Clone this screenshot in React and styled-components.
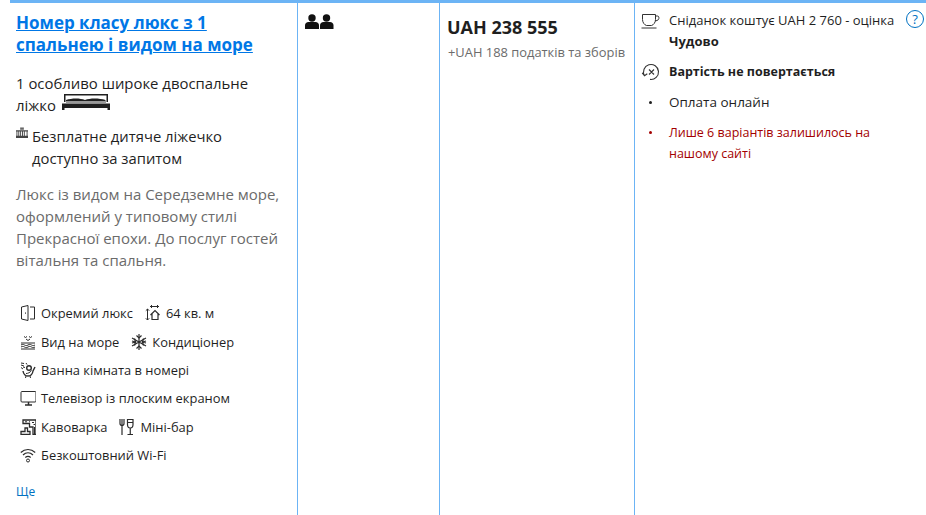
import React from 'react';
import styled, { createGlobalStyle } from 'styled-components';

const GlobalStyle = createGlobalStyle`
  html, body {
    margin: 0;
    padding: 0;
    background: #fff;
  }
  body {
    font-family: "Open Sans", "Noto Sans", sans-serif;
    color: #1f1f1f;
    overflow: hidden;
  }
`;

const icons = {
  door: (
    <>
      <path d="M1.500 2 8 .5v15L1.500 14z" />
      <path d="M10 2h4.500v12H10" />
      <path d="M5.500 7.500v1.200" />
    </>
  ),
  size: (
    <>
      <path d="M5 1.500h9M6.500 0v3M12.500 0v3" />
      <path d="M2.500 4v11M.8 5.700 2.500 4l1.700 1.700M.8 13.300 2.500 15l1.700-1.700" />
      <path d="M5.500 10 10 5.500l4.500 4.500M7 9v5.500h6V9" strokeWidth="1.200" />
    </>
  ),
  sea: (
    <>
      <path d="M4 2.500l1.500 1L7 2.500M9 2.500l1.500 1L12 2.500M6 5l2 1.500L10 5" />
      <path d="M1 9h14M1 11c1.500-.8 2-.8 3.500 0s2 .8 3.500 0 2-.8 3.500 0 2 .8 3.500 0M1 13c1.500-.8 2-.8 3.500 0s2 .8 3.500 0 2-.8 3.500 0 2 .8 3.500 0M1 15h14" />
    </>
  ),
  snow: (
    <>
      <path d="M8 0v16M1 4l14 8M15 4 1 12" strokeWidth="1.200" />
      <path d="M5.500 1.500 8 4l2.500-2.500M5.500 14.500 8 12l2.500 2.500M1 7l3.500 1L3.500 4.500M15 7l-3.500 1 1-3.500M1 9l3.500-1-1 3.500M15 9l-3.500-1 1 3.500" strokeWidth="1.200" />
    </>
  ),
  bath: (
    <>
      <path d="M1 1l3 .500M1 3l3 1M3 5l2 .500M6 1l1 1.500M1 5.500 3 7" />
      <circle cx="9" cy="6" r="2.300" strokeWidth="1.400" />
      <path d="M3 9c.500 3 2 5 5 5 3 0 4.500-2 5-5l2-4" strokeWidth="1.400" />
      <path d="M6 11.500c2 0 4-1 5.500-3M6 14l-.5 2M10 14l.5 2" />
    </>
  ),
  tv: (
    <>
      <rect x="1" y="1.500" width="15" height="10.500" rx="1" />
      <path d="M5 15h7M8.500 12v3" strokeWidth="1.500" />
    </>
  ),
  coffee: (
    <>
      <path d="M3 1h13v14.500h-3V8H9.500V4.500H3z" strokeWidth="1.300" />
      <path d="M5 2.800h2M9 2.800h1M12 3.500h2M13.500 5.500H15" />
      <path d="M1 15.500h9v-3H7.500V9H5v3.500H1z" strokeWidth="1.300" />
      <path d="M14.500 8v7" />
    </>
  ),
  bar: (
    <>
      <path d="M1 0v4.500c0 1.500 1 2 2 2s2-.5 2-2V0M3 0v16" strokeWidth="1.200" />
      <path d="M8.500 .5h5.500v5c0 2-1 3.500-2.750 3.500S8.500 7.500 8.500 5.500zM8.500 3.500h5.500M11.250 9v6.500M8.500 15.500h5.500" strokeWidth="1.200" />
    </>
  ),
  wifi: (
    <>
      <path d="M.8 5.500c4.200-4 10.200-4 14.400 0M3 8c3-2.800 7-2.800 10 0M5.300 10.500c1.700-1.500 3.700-1.500 5.400 0" strokeWidth="1.200" />
      <circle cx="8" cy="13.500" r="1.500" />
    </>
  ),
};

const facilityRows = [
  [{ icon: 'door', label: 'Окремий люкс' }, { icon: 'size', label: '64 кв. м' }],
  [{ icon: 'sea', label: 'Вид на море' }, { icon: 'snow', label: 'Кондиціонер' }],
  [{ icon: 'bath', label: 'Ванна кімната в номері' }],
  [{ icon: 'tv', label: 'Телевізор із плоским екраном' }],
  [{ icon: 'coffee', label: 'Кавоварка' }, { icon: 'bar', label: 'Міні-бар' }],
  [{ icon: 'wifi', label: 'Безкоштовний Wi-Fi' }],
];

const LineIcon = ({ name }) => (
  <FacilityIcon viewBox="0 0 16 16">{icons[name]}</FacilityIcon>
);

const BedIcon = () => (
  <BedSvg viewBox="0 0 48 16">
    <path d="M2 0h44v1.500H2zM2 0h1.500v8H2zM44.500 0H46v8h-1.500z" />
    <path d="M4 6c6-2 14-2 19 0 5-2 14-2 20.500 0v1H4z" />
    <path d="M4 7h40v2H4z" fill="#999" />
    <path d="M0 9.500h48v4.500H0z" />
    <path d="M0 14h2.500v2H0zM45.500 14H48v2h-2.500z" />
  </BedSvg>
);

const CribIcon = () => (
  <CribSvg viewBox="0 0 13 12">
    <path d="M4.500 0h4v2.500h-4z" fill="#666" />
    <path d="M0 3h13v1.500H0zM0 9h13v2.500H0zM.5 4.500h1V9h-1zM2.500 4.500h1V9h-1zM4.500 4.500h1V9h-1zM6.500 4.500h1V9h-1zM8.500 4.500h1V9h-1zM11.500 4.500h1V9h-1z" />
  </CribSvg>
);

const GuestsIcon = () => (
  <GuestsSvg viewBox="0 0 29 15">
    <circle cx="7" cy="4" r="3.700" />
    <path d="M0 15v-3.500C0 9.500 1.500 8 3.500 8h7c2 0 3.500 1.500 3.500 3.500V15z" />
    <circle cx="21.500" cy="4" r="3.700" />
    <path d="M15 15v-3.500c0-2 1.500-3.500 3.500-3.500h6.500c2 0 3.500 1.500 3.500 3.500V15z" />
  </GuestsSvg>
);

const App = () => (
  <>
    <GlobalStyle />
    <Table>
      <RoomCell>
        <RoomTitle href="#">Номер класу люкс з 1 спальнею і видом на море</RoomTitle>
        <BedLine>
          1 особливо широке двоспальне ліжко <BedIcon />
        </BedLine>
        <CribLine>
          <CribIcon />
          <span>Безплатне дитяче ліжечко</span>
          <CribSecond>доступно за запитом</CribSecond>
        </CribLine>
        <Description>
          Люкс із видом на Середземне море, оформлений у типовому стилі Прекрасної епохи. До послуг гостей вітальня та спальня.
        </Description>
        <Facilities>
          {facilityRows.map((row, i) => (
            <FacilityRow key={i}>
              {row.map((item) => (
                <Facility key={item.label}>
                  <LineIcon name={item.icon} />
                  {item.label}
                </Facility>
              ))}
            </FacilityRow>
          ))}
        </Facilities>
        <MoreLink href="#">Ще</MoreLink>
      </RoomCell>
      <GuestsCell>
        <GuestsIcon />
      </GuestsCell>
      <PriceCell>
        <Price>UAH 238 555</Price>
        <Taxes>+UAH 188 податків та зборів</Taxes>
      </PriceCell>
      <TermsCell>
        <HelpIcon>?</HelpIcon>
        <TermRow>
          <TermIcon>
            <svg viewBox="0 0 20 16" width="20" height="16" fill="none" stroke="#333" strokeWidth="1">
              <path d="M1.500 1.500h13v5c0 3-2 5.500-4 6h-5c-2-.5-4-3-4-6zM14.500 3h2c2 0 2 4-.5 4.500l-2 .500M.5 15h15" />
            </svg>
          </TermIcon>
          <BreakfastText>
            Сніданок коштує UAH 2 760 - оцінка <strong>Чудово</strong>
          </BreakfastText>
        </TermRow>
        <TermRow $gapAfter={10}>
          <TermIcon>
            <svg viewBox="0 0 20 20" width="20" height="20" fill="none" stroke="#333" strokeWidth="1.100">
              <path d="M3.500 13.700A7.500 7.500 0 1 1 9 17.400M1.200 10.800l2.300 3 2.800-2M8 7.500l5 5M13 7.500l-5 5" />
            </svg>
          </TermIcon>
          <strong>Вартість не повертається</strong>
        </TermRow>
        <BulletRow $size={13.5}>Оплата онлайн</BulletRow>
        <BulletRow $urgent>Лише 6 варіантів залишилось на нашому сайті</BulletRow>
      </TermsCell>
    </Table>
  </>
);

const Table = styled.div`
  display: grid;
  grid-template-columns: 288px 142px 195px 292px;
  margin-left: 10px;
  width: 916px;
  height: 515px;
  box-sizing: border-box;
  border-top: 3px solid #6cb4f5;
`;

const Cell = styled.div`
  box-sizing: border-box;
  border-right: 1px solid #6cb4f5;
  min-width: 0;
`;

const RoomCell = styled(Cell)`
  padding: 9px 10px 0 6px;
`;

const RoomTitle = styled.a`
  display: block;
  font-size: 17px;
  line-height: 22px;
  font-weight: 700;
  color: #0077e6;
  text-decoration: underline;
`;

const BedLine = styled.div`
  margin-top: 16px;
  font-size: 14.900px;
  line-height: 22px;
`;

const BedSvg = styled.svg`
  width: 48px;
  height: 16px;
  margin-left: 2px;
  vertical-align: 1px;
  fill: #1f1f1f;
`;

const CribLine = styled.div`
  margin-top: 9px;
  font-size: 14.800px;
  line-height: 22px;
`;

const CribSvg = styled.svg`
  width: 12px;
  height: 12px;
  margin-right: 4px;
  fill: #444;
  vertical-align: 3px;
`;

const CribSecond = styled.div`
  padding-left: 16px;
`;

const Description = styled.p`
  margin: 14px 0 0;
  font-size: 15px;
  line-height: 22px;
  color: #6b6b6b;
`;

const Facilities = styled.div`
  margin-top: 28px;
  padding-left: 4px;
`;

const FacilityRow = styled.div`
  display: flex;
  gap: 12px;
  height: 28.400px;
  align-items: center;
`;

const Facility = styled.div`
  display: flex;
  align-items: center;
  gap: 5px;
  font-size: 12.900px;
  white-space: nowrap;
`;

const FacilityIcon = styled.svg`
  width: 16px;
  height: 16px;
  fill: none;
  stroke: #2b2b2b;
  stroke-width: 1;
  flex-shrink: 0;
`;

const MoreLink = styled.a`
  display: block;
  margin-top: 14px;
  font-size: 12px;
  color: #0071c2;
  text-decoration: none;
`;

const GuestsCell = styled(Cell)`
  padding: 11px 7px 0;
`;

const GuestsSvg = styled.svg`
  display: block;
  width: 29px;
  height: 15px;
  fill: #111;
`;

const PriceCell = styled(Cell)`
  padding: 12px 7px 0;
`;

const Price = styled.div`
  font-size: 18px;
  line-height: 24px;
  font-weight: 700;
`;

const Taxes = styled.div`
  margin-top: 3px;
  padding-left: 1px;
  font-size: 12.900px;
  line-height: 20px;
  color: #6b6b6b;
  white-space: nowrap;
`;

const TermsCell = styled.div`
  position: relative;
  padding: 7px 30px 0 6px;
  font-size: 12.500px;
  line-height: 21px;
`;

const HelpIcon = styled.span`
  position: absolute;
  top: 7px;
  right: 3px;
  width: 18px;
  height: 18px;
  box-sizing: border-box;
  border: 1px solid #0071c2;
  border-radius: 50%;
  color: #0071c2;
  font-size: 13px;
  line-height: 16px;
  text-align: center;
`;

const TermRow = styled.div`
  display: flex;
  align-items: flex-start;
  gap: 8px;
  margin-bottom: ${(p) => p.$gapAfter || 9}px;
`;

const BreakfastText = styled.div`
  font-size: 13px;
`;

const TermIcon = styled.span`
  flex: 0 0 20px;
  display: flex;
  align-items: center;
  height: 21px;
`;

const BulletRow = styled.div`
  position: relative;
  padding-left: 28px;
  margin-bottom: 9px;
  font-size: ${(p) => p.$size || 12.5}px;
  color: ${(p) => (p.$urgent ? '#a30000' : '#1f1f1f')};

  &::before {
    content: '';
    position: absolute;
    left: 8px;
    top: 9px;
    width: 3px;
    height: 3px;
    border-radius: 50%;
    background: currentColor;
  }
`;

export default App;
